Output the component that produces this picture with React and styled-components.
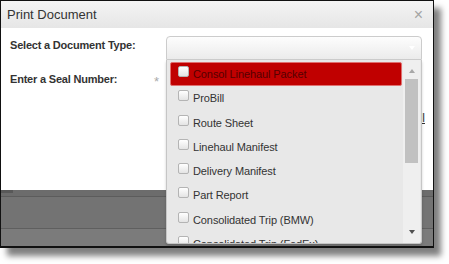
import React from 'react';
import styled, { createGlobalStyle } from 'styled-components';

const GlobalStyle = createGlobalStyle`
  html, body {
    margin: 0;
    padding: 0;
    background: #fff;
  }
  body {
    font-family: "Liberation Sans", Arial, sans-serif;
  }
`;

const Page = styled.div`
  width: 449px;
  height: 264px;
  background: #fff;
`;

const Shot = styled.div`
  width: 432px;
  height: 245px;
  border: 1px solid #111;
  border-bottom-width: 2px;
  box-shadow: 7px 8px 6px rgba(0, 0, 0, 0.5);
  display: flex;
  flex-direction: column;
  overflow: hidden;
`;

const Header = styled.div`
  height: 27px;
  flex-shrink: 0;
  display: flex;
  align-items: center;
  justify-content: space-between;
  padding: 0 10px 0 6px;
  background: linear-gradient(#f4f4f4, #e6e6e6);
`;

const Title = styled.span`
  font-size: 13px;
  color: #333;
`;

const Close = styled.span`
  font-size: 16px;
  line-height: 1;
  color: #a4a4a4;
`;

const Body = styled.div`
  height: 162px;
  flex-shrink: 0;
  box-sizing: border-box;
  padding: 8px 0 0 9px;
  background: #fff;
`;

const Row = styled.div`
  display: flex;
  align-items: flex-start;
  margin-top: ${(p) => p.gap || 0}px;
  justify-content: ${(p) => (p.end ? 'flex-end' : 'flex-start')};
  padding-right: ${(p) => (p.end ? 8 : 0)}px;
`;

const Label = styled.label`
  width: 144px;
  flex-shrink: 0;
  font-size: 11px;
  font-weight: bold;
  line-height: 18px;
  letter-spacing: -0.2px;
  color: #333;
`;

const Required = styled.span`
  width: 12px;
  flex-shrink: 0;
  font-size: 13px;
  line-height: 18px;
  padding-top: 3px;
  color: #aaa;
`;

const SelectWrap = styled.div`
  position: relative;
  width: 256px;
`;

const Select = styled.div`
  height: 24px;
  box-sizing: border-box;
  border: 1px solid #ccc;
  border-radius: 4px 4px 0 0;
  background: linear-gradient(#fdfdfd, #ebebeb);
  display: flex;
  align-items: center;
  justify-content: flex-end;
  padding-right: 6px;
`;

const Caret = styled.span`
  width: 0;
  height: 0;
  border-left: 3px solid transparent;
  border-right: 3px solid transparent;
  border-top: 4px solid ${(p) => p.color || '#fff'};
`;

const UpCaret = styled.span`
  width: 0;
  height: 0;
  border-left: 3.5px solid transparent;
  border-right: 3.5px solid transparent;
  border-bottom: 4px solid ${(p) => p.color};
`;

const DropList = styled.div`
  position: absolute;
  top: 100%;
  left: 0;
  z-index: 2;
  width: 256px;
  height: 184px;
  box-sizing: border-box;
  border: 1px solid #c6c6c6;
  border-top: none;
  border-radius: 0 0 3px 3px;
  background: #e8e8e8;
  box-shadow: 0 2px 3px rgba(0, 0, 0, 0.18);
  display: flex;
  overflow: hidden;
`;

const Options = styled.ul`
  list-style: none;
  margin: 0;
  width: 236px;
  box-sizing: border-box;
  padding: 2px 1px 0 3px;
  overflow: hidden;
`;

const Option = styled.li`
  height: 24.3px;
  box-sizing: border-box;
  display: flex;
  align-items: flex-start;
  gap: 4px;
  padding: 3px 0 0 7px;
  border: 1px solid ${(p) => (p.active ? '#e07070' : 'transparent')};
  border-radius: 2px;
  background: ${(p) => (p.active ? '#c00000' : 'transparent')};
  color: ${(p) => (p.active ? '#560000' : '#333')};
  font-size: 11px;
  letter-spacing: -0.1px;
  white-space: nowrap;
`;

const Check = styled.span`
  width: 11px;
  height: 11px;
  flex-shrink: 0;
  box-sizing: border-box;
  border: 1px solid #b4b4b4;
  border-radius: 2px;
  background: linear-gradient(#fff, #e4e4e4);
`;

const OptionText = styled.span`
  line-height: 16px;
  margin-top: 0px;
`;

const Scrollbar = styled.div`
  width: 17px;
  margin-right: 1px;
  background: #efefef;
  display: flex;
  flex-direction: column;
  align-items: center;
  padding-top: 9px;
  padding-bottom: 9px;
  box-sizing: border-box;
`;

const Thumb = styled.div`
  width: 13px;
  height: 84px;
  margin-top: 6px;
  background: #c1c1c1;
`;

const Spacer = styled.div`
  flex: 1;
`;

const HiddenLink = styled.a`
  font-size: 12px;
  line-height: 18px;
  color: #333;
  text-decoration: underline;
`;

const Backdrop = styled.div`
  flex: 1;
  display: flex;
  flex-direction: column;
  background: #7b7b7b;
`;

const Strip = styled.div`
  height: ${(p) => p.h}px;
  flex-shrink: 0;
  background: ${(p) => p.bg};
`;

const Chip = styled.div`
  width: 12px;
  height: 3px;
  background: #585858;
`;

const docTypes = [
  'Consol Linehaul Packet',
  'ProBill',
  'Route Sheet',
  'Linehaul Manifest',
  'Delivery Manifest',
  'Part Report',
  'Consolidated Trip (BMW)',
  'Consolidated Trip (FedEx)',
];

export default function App() {
  return (
    <Page>
      <GlobalStyle />
      <Shot>
        <Header>
          <Title>Print Document</Title>
          <Close>×</Close>
        </Header>
        <Body>
          <Row>
            <Label>Select a Document Type:</Label>
            <Required />
            <SelectWrap>
              <Select>
                <Caret />
              </Select>
              <DropList>
                <Options>
                  {docTypes.map((name, i) => (
                    <Option key={name} active={i === 0}>
                      <Check />
                      <OptionText>{name}</OptionText>
                    </Option>
                  ))}
                </Options>
                <Scrollbar>
                  <UpCaret color="#a8a8a8" />
                  <Thumb />
                  <Spacer />
                  <Caret color="#505050" />
                </Scrollbar>
              </DropList>
            </SelectWrap>
          </Row>
          <Row gap={10}>
            <Label>Enter a Seal Number:</Label>
            <Required>*</Required>
          </Row>
          <Row gap={18} end>
            <HiddenLink>Print All</HiddenLink>
          </Row>
        </Body>
        <Backdrop>
          <Strip h={6} bg="#6c6c6c">
            <Chip />
          </Strip>
          <Strip h={1} bg="#5c5c5c" />
          <Strip h={31} bg="#737373" />
          <Strip h={1} bg="#5f5f5f" />
        </Backdrop>
      </Shot>
    </Page>
  );
}
